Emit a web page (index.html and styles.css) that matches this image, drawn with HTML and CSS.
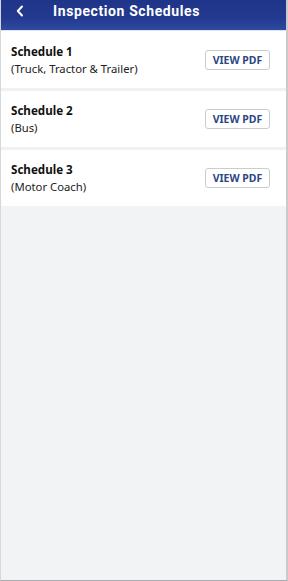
FILE: index.html
```html
<!DOCTYPE html>
<html lang="en">
<head>
    <meta charset="UTF-8">
    <meta name="viewport" content="width=device-width, initial-scale=1.0">
    <title>Inspection Schedules</title>
    <link rel="stylesheet" href="styles.css">
</head>
<body>
    <div class="screen">
        <div class="top-bar">
            <button class="back-button">
                <svg width="10" height="12" viewBox="0 0 10 12"><path d="M7 1.5 L2.8 6 L7 10.5" fill="none" stroke="#fff" stroke-width="2" stroke-linecap="round" stroke-linejoin="round"/></svg>
            </button>
            <h1 class="top-title">Inspection Schedules</h1>
        </div>

        <div class="schedule-list">
            <div class="schedule-row">
                <div class="schedule-info">
                    <div class="schedule-name">Schedule 1</div>
                    <div class="schedule-type">(Truck, Tractor &amp; Trailer)</div>
                </div>
                <button class="pdf-button">VIEW PDF</button>
            </div>
            <div class="schedule-row">
                <div class="schedule-info">
                    <div class="schedule-name">Schedule 2</div>
                    <div class="schedule-type">(Bus)</div>
                </div>
                <button class="pdf-button">VIEW PDF</button>
            </div>
            <div class="schedule-row">
                <div class="schedule-info">
                    <div class="schedule-name">Schedule 3</div>
                    <div class="schedule-type">(Motor Coach)</div>
                </div>
                <button class="pdf-button">VIEW PDF</button>
            </div>
        </div>
    </div>
</body>
</html>
```

FILE: styles.css
```css
body {
    margin: 0;
    background: #f2f3f5;
    font-family: "Noto Sans", Roboto, sans-serif;
    color: #111;
}

.screen {
    height: 580px;
    border-left: 1px solid #d6d7da;
    border-right: 2px solid #c9cacd;
    border-bottom: 1px solid #a9aaad;
    background: #f2f3f5;
    overflow: hidden;
}

.top-bar {
    height: 30px;
    display: flex;
    align-items: center;
    background: linear-gradient(180deg, #1f358a 0%, #22398f 60%, #2d4b9f 100%);
    border-bottom: 1px solid #dfe3ee;
}

.back-button {
    width: 40px;
    height: 30px;
    border: none;
    background: none;
    padding: 0 0 8px 14px;
    display: flex;
    align-items: center;
}

.top-title {
    margin: 0 0 8px 12px;
    font-family: Roboto, sans-serif;
    font-size: 14px;
    font-weight: bold;
    letter-spacing: 0.6px;
    color: #fff;
}

.schedule-list {
    display: flex;
    flex-direction: column;
    gap: 3px;
    background: #f1f1f2;
}

.schedule-row {
    height: 56px;
    display: flex;
    align-items: center;
    justify-content: space-between;
    padding: 0 16px 0 10px;
    background: #fff;
}

.schedule-row:first-child {
    height: 57px;
}

.schedule-name {
    font-size: 11.6px;
    font-weight: bold;
    line-height: 17px;
}

.schedule-type {
    font-size: 11.3px;
    line-height: 17px;
    color: #222;
}

.pdf-button {
    width: 65px;
    height: 20px;
    padding: 0;
    border: 1px solid #c9ccd2;
    border-radius: 3px;
    background: #fff;
    color: #2c4785;
    font-family: "Noto Sans", sans-serif;
    font-size: 10.5px;
    font-weight: bold;
    cursor: pointer;
}
```
